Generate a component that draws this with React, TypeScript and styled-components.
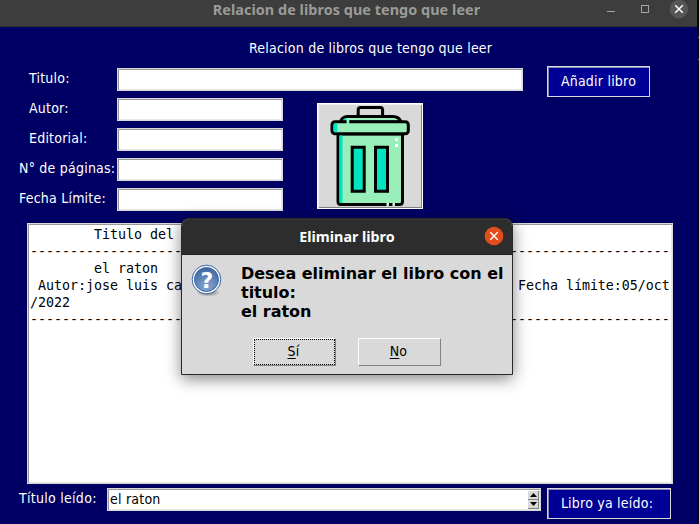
import React from "react";
import styled, { createGlobalStyle } from "styled-components";

const Global = createGlobalStyle`
  * { box-sizing: border-box; }
  body { margin: 0; background: #000; overflow: hidden; }
`;

const UI = `"DejaVu Sans Condensed", "DejaVu Sans", sans-serif`;
const TITLE = `"Noto Sans", sans-serif`;
const MONO = `"DejaVu Sans Mono", monospace`;

const Desktop = styled.div`
  position: relative;
  width: 699px;
  height: 524px;
  overflow: hidden;
  display: flex;
  background: #050505;
  font-family: ${UI};
  font-size: 14px;
  letter-spacing: 0.22px;
`;

const Window = styled.main`
  width: 697px;
  height: 524px;
  display: flex;
  flex-direction: column;
  background: #000064;
  color: #fff;
`;

const DesktopEdge = styled.aside`
  width: 2px;
  padding-top: 37px;
  display: flex;
  flex-direction: column;
  gap: 21px;
`;

const EdgeMark = styled.i`
  height: 1px;
  margin-left: 1px;
  background: #777;
`;

const TitleBar = styled.header`
  height: 27px;
  flex: none;
  display: grid;
  grid-template-columns: 100px 1fr 100px;
  background: #3d3d3d;
  border-bottom: 1px solid #303030;
`;

const TitleText = styled.h1`
  grid-column: 2;
  margin: 0;
  padding-right: 4px;
  text-align: center;
  font: 700 14.4px/20px ${TITLE};
  letter-spacing: 0.05px;
  color: #9b9b97;
  white-space: nowrap;
`;

const Controls = styled.svg`
  display: block;
  width: 100px;
  height: 26px;
`;

const Heading = styled.p`
  margin: 11px 0 0 249px;
  height: 30px;
  line-height: 20px;
`;

const FormArea = styled.section`
  display: grid;
  grid-template-columns: 523px 174px;
  height: 155px;
`;

const Fields = styled.div`
  display: grid;
  grid-template-columns: 117px 166px 240px;
  grid-template-rows: repeat(5, 30px);
`;

const Label = styled.label<{ $indent: number }>`
  grid-column: 1;
  padding-left: ${(p) => p.$indent}px;
  line-height: 20px;
  white-space: nowrap;
`;

const Entry = styled.input<{ $wide?: boolean }>`
  grid-column: ${(p) => (p.$wide ? "2 / 4" : "2")};
  width: 100%;
  height: 23px;
  padding: 0;
  border: 1px solid #d9d9d9;
  outline: none;
  background: #fff;
  box-shadow: inset 1px 1px #999, inset -1px -1px #e6e6e6;
`;

const TrashButton = styled.button`
  grid-column: 3;
  grid-row: 2 / 6;
  width: 106px;
  height: 106px;
  margin: 5px 0 0 34px;
  padding: 0;
  border: 1px solid #fff;
  background: #d9d9d9;
  box-shadow: inset 1px 1px #ededed, inset -1px -1px #828282;
`;

const TrashDrawing = styled.svg`
  display: block;
  width: 104px;
  height: 104px;
`;

const ActionButton = styled.button<{ $width: number; $shift?: number }>`
  width: ${(p) => p.$width}px;
  height: 31px;
  padding: 0 ${(p) => p.$shift ?? 0}px 2px 0;
  border: 1px solid #d9d9d9;
  border-radius: 0;
  background: #000096;
  box-shadow: inset 1px 1px #8989b5;
  color: #fff;
  font: 14px/20px ${UI};
  letter-spacing: 0.22px;
  white-space: nowrap;
`;

const AddCell = styled.div`
  padding: 0 0 0 24px;
  margin-top: -2px;
`;

const BookList = styled.pre`
  width: 646px;
  height: 261px;
  flex: none;
  margin: 0 0 0 27px;
  padding: 2px 0 0 2px;
  border: 1px solid #d9d9d9;
  background: #fff;
  box-shadow: inset 1px 1px #999, inset -1px -1px #e6e6e6;
  color: #000;
  font: 13.33px/17px ${MONO};
  letter-spacing: -0.026px;
  overflow: hidden;
`;

const Footer = styled.footer`
  display: flex;
  height: 40px;
  padding: 4px 0 0 19px;
`;

const FooterLabel = styled.label`
  width: 88px;
  line-height: 20px;
  letter-spacing: 0.28px;
  white-space: nowrap;
`;

const Spinner = styled.div`
  width: 434px;
  height: 23px;
  display: flex;
  justify-content: space-between;
  padding: 2px 1px 0 2px;
  margin-right: 6px;
  border: 1px solid #d9d9d9;
  background: #fff;
  box-shadow: inset 1px 1px #999, inset -1px -1px #e6e6e6;
  color: #000;
  line-height: 17px;
`;

const Steps = styled.svg`
  display: block;
  width: 11px;
  height: 18px;
`;

const Dialog = styled.div`
  position: absolute;
  left: 181px;
  top: 218px;
  width: 332px;
  height: 157px;
  border: 1px solid #292929;
  border-radius: 8px 8px 0 0;
  background: #d9d9d9;
  box-shadow: 0 4px 16px rgba(0, 0, 0, 0.48);
  color: #000;
`;

const DialogBar = styled.div`
  height: 36px;
  display: grid;
  grid-template-columns: 40px 1fr 40px;
  align-items: center;
  border-bottom: 1px solid #202020;
  border-radius: 7px 7px 0 0;
  background: #2d2d2d;
  box-shadow: inset 0 1px #343434;
`;

const DialogTitle = styled.h2`
  grid-column: 2;
  margin: 0;
  text-align: center;
  font: 700 14.3px/20px ${TITLE};
  letter-spacing: 0;
  color: #fff;
`;

const CloseDot = styled.svg`
  display: block;
  width: 20px;
  height: 20px;
  margin: 0 0 2px 12px;
`;

const Message = styled.div`
  display: flex;
  gap: 15px;
  height: 83px;
  padding: 9px 0 0 9px;
`;

const QuestionIcon = styled.svg`
  display: block;
  width: 34px;
  height: 34px;
  flex: none;
`;

const MessageText = styled.p`
  margin: 0;
  padding-left: 1px;
  font: 700 16px/19px "DejaVu Sans", sans-serif;
  letter-spacing: -0.02px;
  white-space: nowrap;
`;

const Choices = styled.div`
  display: flex;
  gap: 22px;
  padding-left: 71px;
`;

const Choice = styled.button<{ $focused?: boolean }>`
  width: 83px;
  height: 28px;
  padding: 0 2px 3px 0;
  border: 1px solid;
  border-color: #fff #828282 #828282 #fff;
  border-radius: 0;
  outline: ${(p) => (p.$focused ? "1px dotted #000" : "none")};
  outline-offset: -2px;
  background: #d9d9d9;
  color: #000;
  font: 14px/20px ${UI};
  letter-spacing: 0.22px;
`;

const Key = styled.span`
  text-decoration: underline;
  text-underline-offset: 2px;
  text-decoration-thickness: 1px;
`;

const fields = [
  { label: "Titulo:", indent: 29, wide: true },
  { label: "Autor:", indent: 29 },
  { label: "Editorial:", indent: 29 },
  { label: "N° de páginas:", indent: 19 },
  { label: "Fecha Límite:", indent: 19 },
];

const rule = "-".repeat(80);
const listing = [
  " ".repeat(8) + "Titulo del",
  rule,
  " ".repeat(8) + "el raton",
  " Autor:jose luis ca".padEnd(61) + "Fecha límite:05/oct",
  "/2022",
  rule,
].join("\n");

function Trash() {
  return (
    <TrashDrawing viewBox="318 104 104 104">
      <g stroke="#000" strokeWidth="3" strokeLinejoin="round">
        <path d="M358.200 115v-5q0-2.400 2.400-2.400h19.600q2.400 0 2.400 2.400v5" fill="none" />
        <path d="M340.500 122q1.500-5.500 7-5.500h45.500q6 0 8 5.500z" fill="#98efba" />
        <path d="M338 134h64.500v67.500q0 3-3 3h-58.500q-3 0-3-3z" fill="#98efba" />
      </g>
      <path d="M339.500 135h3v68h-2q-1 0-1-1z" fill="#00e5bf" />
      <path d="M342.500 120.500q1.500-2.500 5-2.500l-2.500 3z" fill="#00e5bf" />
      <rect x="332" y="121.800" width="76.300" height="12" rx="3" fill="#98efba" stroke="#000" strokeWidth="3" />
      <path d="M333.500 125q0-1.700 2-1.700h1.800v9h-1.800q-2 0-2-2z" fill="#00e5bf" />
      <path d="M346.500 119.500h2.800v4.300h-2.800z" fill="#98efba" />
      <g fill="#00e5bf" stroke="#000" strokeWidth="3">
        <path d="M352.200 147.200h12v44h-12z" />
        <path d="M375.500 147.200h12v44h-12z" />
      </g>
      <path d="M395 138h3v3h-3zM395 144h3v3h-3z" fill="#fff" />
      <path d="M386.500 203h2.400v3h-2.400zM392.500 203h2.400v3h-2.400z" fill="#d9f5e5" />
    </TrashDrawing>
  );
}

export default function App() {
  return (
    <Desktop>
      <Global />
      <Window>
        <TitleBar>
          <TitleText>Relacion de libros que tengo que leer</TitleText>
          <Controls viewBox="597 0 100 26" fill="none">
            <path d="M607 11.500h8" stroke="#a5a5a1" />
            <rect x="641.500" y="5.500" width="7" height="7" stroke="#a5a5a1" />
            <circle cx="679" cy="9" r="9.200" fill="#575757" />
            <path d="M675.200 5.200l7.600 7.600M682.800 5.200l-7.600 7.600" stroke="#fff" strokeWidth="1.500" />
          </Controls>
        </TitleBar>
        <Heading>Relacion de libros que tengo que leer</Heading>
        <FormArea>
          <Fields>
            {fields.map((f) => (
              <React.Fragment key={f.label}>
                <Label $indent={f.indent}>{f.label}</Label>
                <Entry $wide={f.wide} aria-label={f.label} />
              </React.Fragment>
            ))}
            <TrashButton aria-label="Eliminar">
              <Trash />
            </TrashButton>
          </Fields>
          <AddCell>
            <ActionButton $width={103}>Añadir libro</ActionButton>
          </AddCell>
        </FormArea>
        <BookList>{listing}</BookList>
        <Footer>
          <FooterLabel>Título leído:</FooterLabel>
          <Spinner>
            el raton
            <Steps viewBox="0 0 11 18">
              <path d="M0 0h11v8H0zM0 9h11v8H0z" fill="#d9d9d9" />
              <path d="M0 8.500h11M0 17.500h11M10.500 0v17" stroke="#828282" />
              <path d="M2 6h7L5.500 2zM2 11h7L5.500 15z" fill="#000" />
            </Steps>
          </Spinner>
          <ActionButton $width={124} $shift={4}>
            Libro ya leído:
          </ActionButton>
        </Footer>
      </Window>
      <DesktopEdge>
        <EdgeMark />
        <EdgeMark />
      </DesktopEdge>
      <Dialog role="dialog">
        <DialogBar>
          <DialogTitle>Eliminar libro</DialogTitle>
          <CloseDot viewBox="0 0 20 20">
            <circle cx="10" cy="10" r="9.300" fill="#e24e1b" />
            <path d="M6.300 6.300l7.400 7.400M13.700 6.300l-7.400 7.400" stroke="#fff" strokeWidth="1.400" />
          </CloseDot>
        </DialogBar>
        <Message>
          <QuestionIcon viewBox="0 0 34 34">
            <defs>
              <radialGradient id="blue" cx=".5" cy=".8" r=".75">
                <stop offset="0" stopColor="#86a9d3" />
                <stop offset="1" stopColor="#4069a5" />
              </radialGradient>
              <radialGradient id="shade">
                <stop offset=".5" stopColor="#777" stopOpacity=".6" />
                <stop offset="1" stopColor="#777" stopOpacity="0" />
              </radialGradient>
            </defs>
            <ellipse cx="17" cy="28.500" rx="12" ry="4" fill="url(#shade)" />
            <circle cx="15.500" cy="15.500" r="14.300" fill="#fff" stroke="#3465a4" />
            <circle cx="15.500" cy="15.500" r="12" fill="url(#blue)" stroke="#4269a1" />
            <text x="16" y="23.500" textAnchor="middle" fill="#fff" fontFamily="DejaVu Sans" fontWeight="700" fontSize="22">?</text>
          </QuestionIcon>
          <MessageText>
            Desea eliminar el libro con el
            <br />
            titulo:
            <br />
            el raton
          </MessageText>
        </Message>
        <Choices>
          <Choice $focused>
            <Key>S</Key>í
          </Choice>
          <Choice>
            <Key>N</Key>o
          </Choice>
        </Choices>
      </Dialog>
    </Desktop>
  );
}
